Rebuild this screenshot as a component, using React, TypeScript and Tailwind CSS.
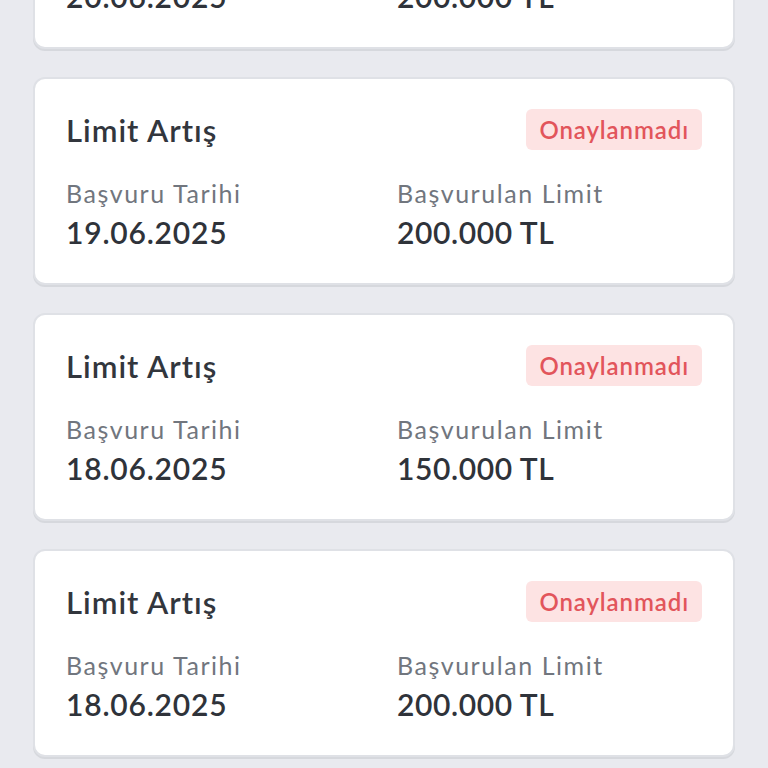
import React from "react";

type Item = { date: string; limit: string };

const items: Item[] = [
  { date: "20.06.2025", limit: "200.000 TL" },
  { date: "19.06.2025", limit: "200.000 TL" },
  { date: "18.06.2025", limit: "150.000 TL" },
  { date: "18.06.2025", limit: "200.000 TL" },
];

function Card({ item }: { item: Item }) {
  return (
    <div className="h-[208px] shrink-0 rounded-[12px] border-2 border-[#dfe1e6] bg-white px-[31px] pt-[30px] shadow-[0_2px_0_#d6d8dd]">
      <div className="flex items-center justify-between">
        <div className="text-[31px] font-semibold leading-[32px] tracking-[1px] text-[#32363d]">Limit Artış</div>
        <div className="flex h-[41px] items-center rounded-[6px] bg-[#fde3e3] px-[13px] text-[24px] font-semibold tracking-[0.9px] text-[#e2555b]">
          Onaylanmadı
        </div>
      </div>
      <div className="mt-[25px] grid grid-cols-2 gap-x-[26px]">
        <div>
          <div className="text-[25px] leading-[36px] tracking-[1.55px] text-[#71767e]">Başvuru Tarihi</div>
          <div className="mt-[1px] text-[30px] font-semibold leading-[40px] tracking-[0.8px] text-[#2f333a]">{item.date}</div>
        </div>
        <div>
          <div className="text-[25px] leading-[36px] tracking-[1.55px] text-[#71767e]">Başvurulan Limit</div>
          <div className="mt-[1px] text-[30px] font-semibold leading-[40px] tracking-[0.6px] text-[#2f333a]">{item.limit}</div>
        </div>
      </div>
    </div>
  );
}

export default function App() {
  return (
    <div
      className="h-[768px] w-[768px] overflow-hidden bg-[#e9eaef]"
      style={{ fontFamily: "Lato, 'Noto Sans', sans-serif" }}
    >
      <div className="-mt-[159px] flex flex-col gap-[28px] px-[33px]">
        {items.map((it, i) => (
          <Card key={i} item={it} />
        ))}
      </div>
    </div>
  );
}
